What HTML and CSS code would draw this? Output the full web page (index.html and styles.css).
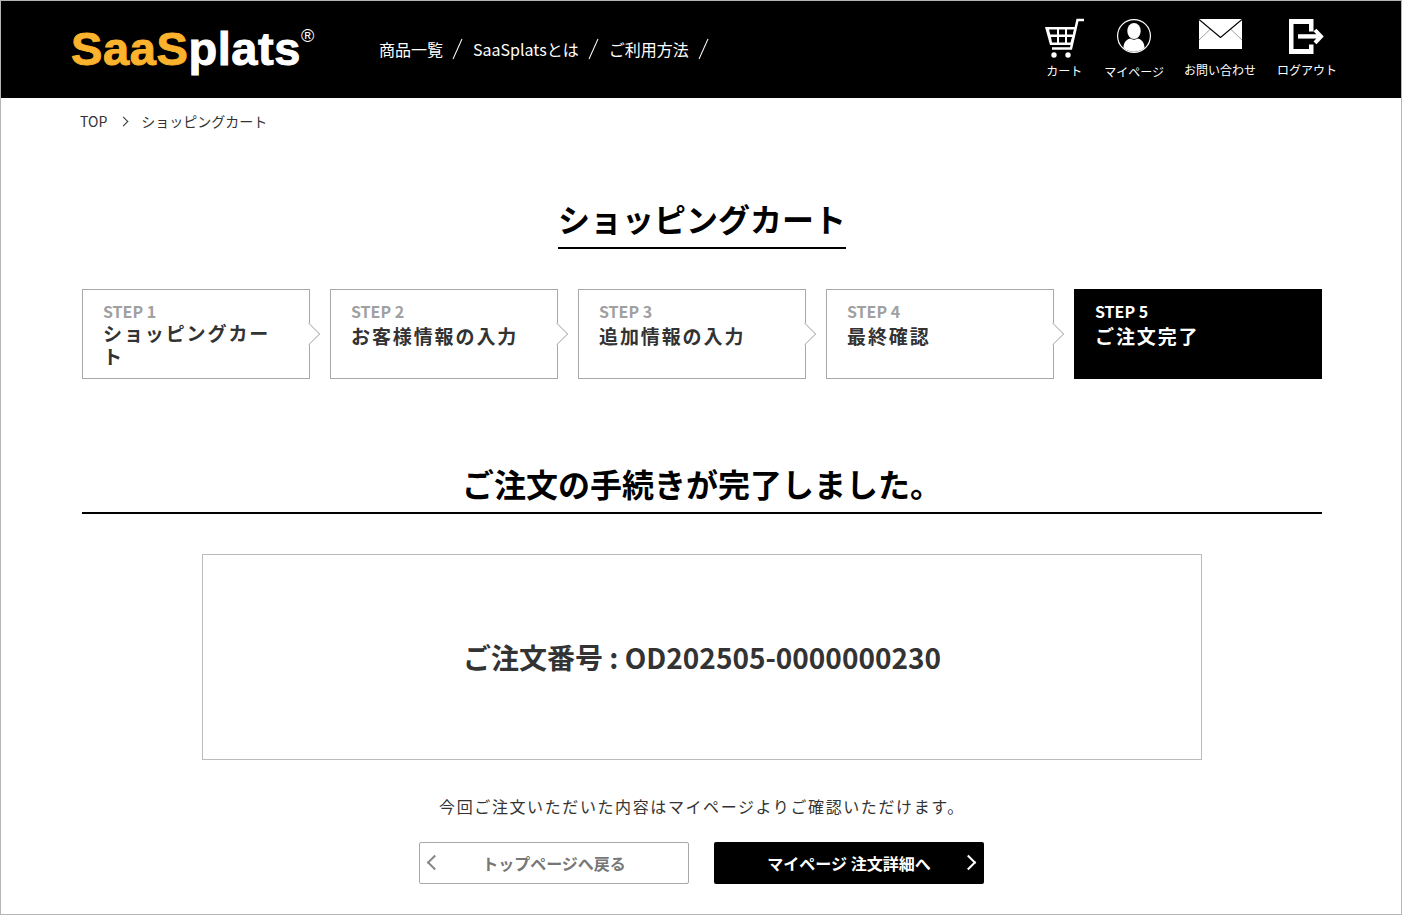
FILE: index.html
```html
<!DOCTYPE html>
<html lang="ja">
<head>
    <meta charset="UTF-8">
    <meta name="viewport" content="width=device-width, initial-scale=1.0">
    <title>ショッピングカート</title>
    <link rel="stylesheet" href="styles.css">
</head>
<body>
<div class="page">
    <header class="site-header">
        <a class="logo" href="#"><span class="logo-accent">SaaS</span>plats<sup class="logo-mark">®</sup></a>
        <nav class="main-nav">
            <a href="#">商品一覧</a><span class="slash"></span>
            <a href="#">SaaSplatsとは</a><span class="slash"></span>
            <a href="#">ご利用方法</a><span class="slash"></span>
        </nav>
        <div class="header-icons">
            <a class="icon-link icon-cart" href="#">
                <svg width="40" height="40" viewBox="0 0 40 40">
                    <path d="M39 2h-6.500L26 30.500H7" fill="none" stroke="#fff" stroke-width="2.500"/>
                    <path d="M0 9h31.500L27 27H5z M4 11.500l1.300 5H12v-5z M14 11.500v5h6v-5z M22 11.500v5h6l1-5z M6 19l1 5.500h5V19z M14 19v5.500h6V19z M22 19v5.500h3.500l1.500-5.500z" fill="#fff" fill-rule="evenodd"/>
                    <circle cx="9" cy="37" r="2.700" fill="#fff"/>
                    <circle cx="23" cy="37" r="2.700" fill="#fff"/>
                </svg>
                <span>カート</span>
            </a>
            <a class="icon-link icon-user" href="#">
                <svg width="34" height="34" viewBox="0 0 34 34">
                    <circle cx="17" cy="17" r="16.400" fill="none" stroke="#fff" stroke-width="1.200"/>
                    <ellipse cx="17" cy="12" rx="6.700" ry="8" fill="#fff"/>
                    <path d="M6.500 29c0-5.500 2.500-8 6.500-9.500 2.500 1.500 5.500 1.500 8 0 4 1.500 6.500 4 6.500 9.500-6 5-15 5-21 0z" fill="#fff"/>
                </svg>
                <span>マイページ</span>
            </a>
            <a class="icon-link icon-mail" href="#">
                <svg width="43" height="30" viewBox="0 0 43 30">
                    <rect width="43" height="30" fill="#fff"/>
                    <path d="M11 10.500L0 21M32 10.500L43 21" fill="none" stroke="#888" stroke-width=".8"/>
                    <path d="M0 .5l21.500 18L43 .5" fill="none" stroke="#000" stroke-width="1.200"/>
                </svg>
                <span>お問い合わせ</span>
            </a>
            <a class="icon-link icon-logout" href="#">
                <svg width="36" height="35" viewBox="0 0 36 35">
                    <path d="M0 0h24.500v12.500H20V5H4.500v25H20v-4.500h4.500V35H0z" fill="#fff"/>
                    <path d="M9 15.200h20v4.400H9z" fill="#fff"/>
                    <path d="M26 11l6 6.400-6 6.400" fill="none" stroke="#fff" stroke-width="4"/>
                </svg>
                <span>ログアウト</span>
            </a>
        </div>
    </header>

    <div class="breadcrumb">
        <a href="#">TOP</a>
        <span class="crumb-arrow"></span>
        <span>ショッピングカート</span>
    </div>

    <main class="content">
        <div class="title-wrap">
            <h1 class="page-title">ショッピングカート</h1>
        </div>

        <ol class="steps">
            <li class="step"><span class="step-no">STEP 1</span><span class="step-name step-name-long">ショッピングカート</span></li>
            <li class="step"><span class="step-no">STEP 2</span><span class="step-name">お客様情報の入力</span></li>
            <li class="step"><span class="step-no">STEP 3</span><span class="step-name">追加情報の入力</span></li>
            <li class="step"><span class="step-no">STEP 4</span><span class="step-name">最終確認</span></li>
            <li class="step step-current"><span class="step-no">STEP 5</span><span class="step-name">ご注文完了</span></li>
        </ol>

        <h2 class="done-title">ご注文の手続きが完了しました。</h2>

        <div class="order-box">ご注文番号 : OD202505-0000000230</div>

        <p class="note">今回ご注文いただいた内容はマイページよりご確認いただけます。</p>

        <div class="buttons">
            <a class="btn btn-back" href="#">トップページへ戻る</a>
            <a class="btn btn-next" href="#">マイページ 注文詳細へ</a>
        </div>
    </main>
</div>
</body>
</html>
```

FILE: styles.css
```css
* {
    box-sizing: border-box;
}
body {
    margin: 0;
    font-family: "Noto Sans CJK JP", "Noto Sans", sans-serif;
    color: #333;
    background-color: #fff;
}
a {
    color: inherit;
    text-decoration: none;
}
.page {
    height: 915px;
    border: 1px solid #b5b5b5;
    overflow: hidden;
}

/* header */
.site-header {
    height: 97px;
    background-color: #000;
    color: #fff;
    display: flex;
    align-items: center;
    padding-left: 70px;
}
.logo {
    width: 308px;
    font-family: "Liberation Sans", Arial, sans-serif;
    font-weight: bold;
    font-size: 47px;
    line-height: 1;
    letter-spacing: .6px;
    -webkit-text-stroke: 1px currentColor;
    margin-top: -3px;
    white-space: nowrap;
}
.logo-accent {
    color: #fbb22c;
}
.logo-mark {
    font-size: 18px;
    font-weight: normal;
    -webkit-text-stroke: 0;
    vertical-align: 23px;
    line-height: 0;
}
.main-nav {
    display: flex;
    align-items: center;
    font-size: 16px;
    margin-top: -2px;
}
.slash {
    width: 1px;
    height: 22px;
    background-color: #fff;
    transform: rotate(24deg);
    margin: 0 15px 0 14px;
}
.header-icons {
    align-self: flex-start;
    margin-top: 19px;
    margin-left: auto;
    margin-right: 64px;
    display: flex;
    align-items: flex-start;
}
.icon-link {
    display: flex;
    flex-direction: column;
    align-items: center;
    font-size: 12px;
    line-height: 16px;
    white-space: nowrap;
}
.icon-cart {
    width: 36px;
    margin-right: 22px;
}
.icon-cart svg {
    margin-left: 2px;
    margin-top: -2px;
    margin-bottom: 5px;
}
.icon-user {
    margin-right: 20px;
}
.icon-user svg {
    margin-top: -1px;
    margin-bottom: 11px;
}
.icon-mail {
    margin-right: 21px;
}
.icon-mail svg {
    margin-left: 2px;
    margin-top: -1px;
    margin-bottom: 13px;
}
.icon-logout svg {
    margin-top: -1px;
    margin-left: 1px;
    margin-bottom: 8px;
}

/* breadcrumb */
.breadcrumb {
    display: flex;
    align-items: center;
    padding: 13px 0 0 79px;
    font-size: 14px;
    line-height: 20px;
    color: #333;
}
.crumb-arrow {
    width: 7px;
    height: 7px;
    border-top: 1px solid #333;
    border-right: 1px solid #333;
    transform: rotate(45deg);
    margin: 0 14px 0 13px;
}

/* main */
.content {
    width: 1240px;
    margin-left: 81px;
}
.title-wrap {
    text-align: center;
    margin-top: 59px;
}
.page-title {
    display: inline-block;
    margin: 0;
    font-size: 32px;
    line-height: 57px;
    font-weight: bold;
    color: #000;
    border-bottom: 2px solid #000;
}
.steps {
    list-style: none;
    margin: 40px 0 0;
    padding: 0;
    display: flex;
    gap: 20px;
}
.step {
    position: relative;
    width: 228px;
    height: 90px;
    padding: 11px 20px 0;
    border: 1px solid #a8a8a8;
    background-color: #fff;
}
.step::after {
    content: "";
    position: absolute;
    top: 36px;
    right: -8px;
    width: 15px;
    height: 15px;
    border-top: 1px solid #bbb;
    border-right: 1px solid #bbb;
    background-color: #fff;
    transform: rotate(45deg);
}
.step-no {
    display: block;
    font-size: 16px;
    line-height: 20px;
    font-weight: bold;
    color: #a0a0a0;
}
.step-name {
    display: block;
    margin-top: 3px;
    font-size: 19px;
    line-height: 23px;
    font-weight: bold;
    letter-spacing: 1.900px;
    color: #333;
}
.step-name-long {
    margin-top: 0;
}
.step-current {
    width: 248px;
    border-color: #000;
    background-color: #000;
}
.step-current::after {
    display: none;
}
.step-current .step-no,
.step-current .step-name {
    color: #fff;
}
.done-title {
    margin: 65px 0 0;
    height: 70px;
    font-size: 32px;
    line-height: 78px;
    font-weight: bold;
    color: #000;
    text-align: center;
    border-bottom: 2px solid #000;
}
.order-box {
    width: 1000px;
    height: 206px;
    margin: 40px auto 0;
    border: 1px solid #bbb;
    display: flex;
    align-items: center;
    justify-content: center;
    font-size: 28px;
    font-weight: bold;
}
.note {
    margin: 35px 0 0;
    text-align: center;
    font-size: 16px;
    line-height: 22px;
    letter-spacing: 1.600px;
}
.buttons {
    display: flex;
    justify-content: center;
    gap: 25px;
    margin-top: 25px;
    padding-right: 2px;
}
.btn {
    position: relative;
    width: 270px;
    height: 42px;
    border-radius: 2px;
    display: flex;
    align-items: center;
    justify-content: center;
    font-size: 16px;
    font-weight: bold;
}
.btn::before {
    content: "";
    position: absolute;
    top: 15px;
    width: 9px;
    height: 9px;
    transform: rotate(45deg);
}
.btn-back {
    border: 1px solid #a8a8a8;
    color: #777;
    padding-left: 1px;
}
.btn-back::before {
    left: 9px;
    top: 14px;
    border-left: 2px solid #888;
    border-bottom: 2px solid #888;
}
.btn-next {
    background-color: #000;
    color: #fff;
    padding-left: 1px;
}
.btn-next::before {
    right: 10px;
    border-top: 2px solid #fff;
    border-right: 2px solid #fff;
}
```
